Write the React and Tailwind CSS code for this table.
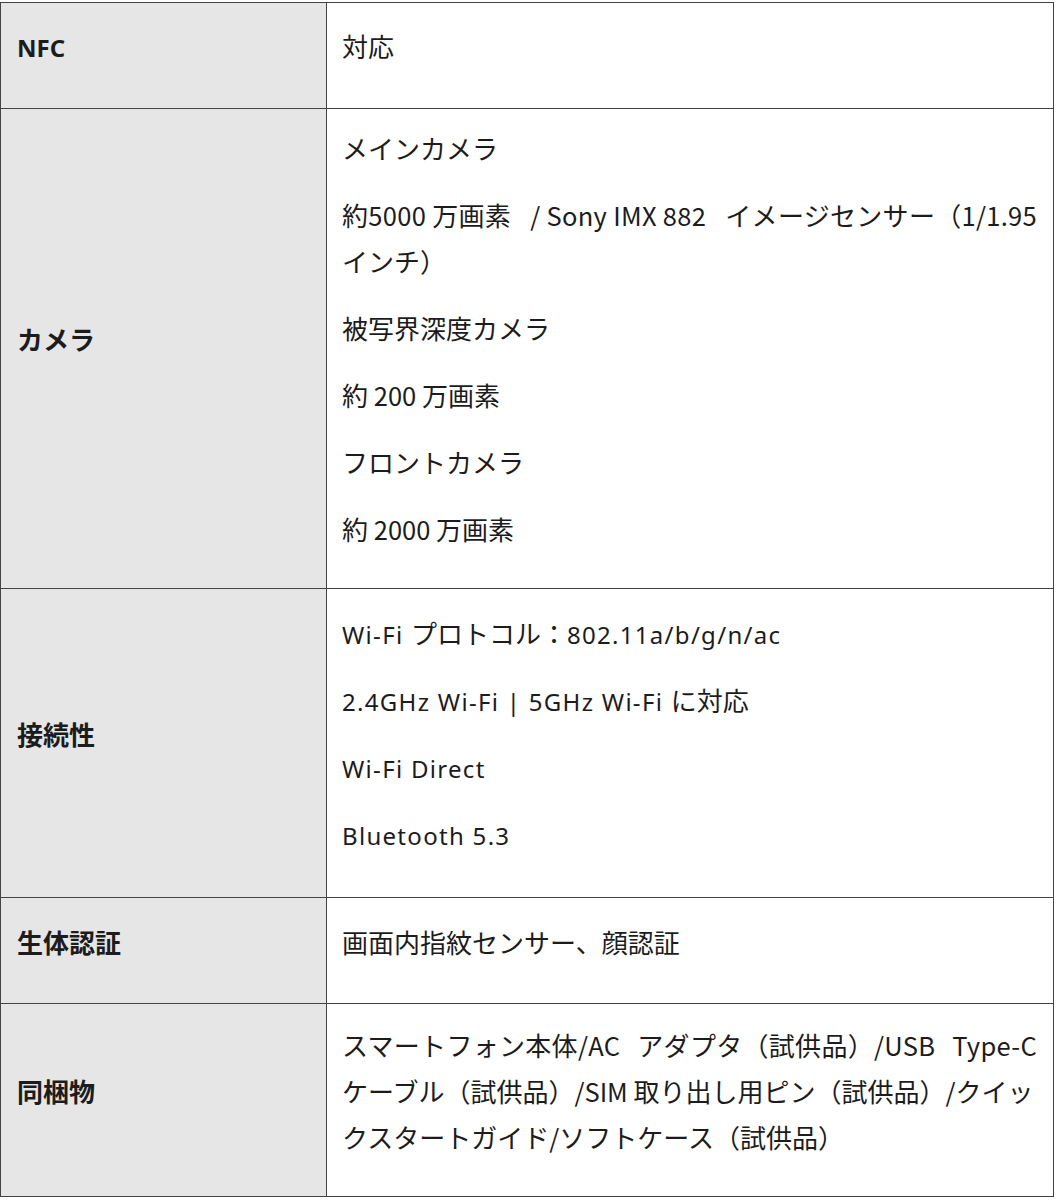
import React from 'react';

// 仕様表の行データ（配列の配列 = 両端揃えで区切る語のまとまり）
const rows = [
  { label: 'NFC', pt: 'pt-[20px]', pb: 'pb-[18px]', paras: [['対応']] },
  {
    label: 'カメラ',
    pt: 'pt-[16px]',
    pb: 'pb-[15px]',
    latin: 'cjk',
    paras: [
      ['メインカメラ'],
      [['約5000 万画素', '/ Sony IMX 882', 'イメージセンサー（1/1.95'], 'インチ）'],
      ['被写界深度カメラ'],
      ['約 200 万画素'],
      ['フロントカメラ'],
      ['約 2000 万画素'],
    ],
  },
  {
    label: '接続性',
    pt: 'pt-[21px]',
    pb: 'pb-[19px]',
    paras: [
      ['Wi-Fi プロトコル：802.11a/b/g/n/ac'],
      ['2.4GHz Wi-Fi | 5GHz Wi-Fi に対応'],
      ['Wi-Fi Direct'],
      ['Bluetooth 5.3'],
    ],
  },
  { label: '生体認証', pt: 'pt-[21px]', pb: 'pb-[17px]', paras: [['画面内指紋センサー、顔認証']] },
  {
    label: '同梱物',
    pt: 'pt-[18px]',
    pb: 'pb-[15px]',
    latin: 'cjk',
    paras: [
      [
        ['スマートフォン本体/AC', 'アダプタ（試供品）/USB', 'Type-C'],
        'ケーブル（試供品）/SIM 取り出し用ピン（試供品）/クイッ',
        'クスタートガイド/ソフトケース（試供品）',
      ],
    ],
  },
];

const CJK = /[\u3000-\u30ff\u3400-\u9fff\uff00-\uffef]/;

// 和文と欧文を分けて、欧文だけ別サイズ・字間にする
const splitRuns = (text) => {
  const runs = [];
  let cur = '';
  let curCjk = null;
  for (const ch of text) {
    const c = CJK.test(ch);
    if (curCjk === null || c === curCjk) {
      cur += ch;
    } else {
      runs.push([curCjk, cur]);
      cur = ch;
    }
    curCjk = c;
  }
  if (cur) runs.push([curCjk, cur]);
  return runs;
};

const Mixed = ({ text, latin }) =>
  splitRuns(text).map(([cjk, s], i) =>
    cjk ? (
      <span key={i}>{s}</span>
    ) : latin === 'cjk' ? (
      <span key={i} className="text-[25.5px] leading-none">{s}</span>
    ) : latin === 'label' ? (
      <span key={i} className="font-['Noto_Sans','Noto_Sans_CJK_JP',sans-serif] text-[24px] leading-none">
        {s}
      </span>
    ) : (
      <span
        key={i}
        className="font-['Noto_Sans','Noto_Sans_CJK_JP',sans-serif] text-[24px] leading-none tracking-[1.3px]"
      >
        {s}
      </span>
    )
  );

const App = () => {
  return (
    <div className="min-h-[1200px] bg-white pt-[2px] font-['Noto_Sans_CJK_JP',sans-serif] text-[26px] leading-[46px] text-[#1c1c1c]">
      <div className="w-[1054px] border border-[#444444]">
        {rows.map((row, idx) => (
          <div
            key={row.label}
            className={`grid grid-cols-[326px_1fr] ${idx > 0 ? 'border-t border-[#444444]' : ''}`}
          >
            <div className={`flex items-center border-r border-[#444444] bg-[#e6e6e6] pl-4 ${row.pt} ${row.pb}`}>
              <p className="mb-[21px] font-bold">
                <Mixed text={row.label} latin="label" />
              </p>
            </div>
            <div className={`pl-[15px] pr-4 ${row.pt} ${row.pb}`}>
              {row.paras.map((lines, i) => (
                <p key={i} className="mb-[21px]">
                  {lines.map((line, j) =>
                    Array.isArray(line) ? (
                      <span key={j} className="flex justify-between tracking-[0.3px]">
                        {line.map((w, k) => (
                          <span key={k} className="whitespace-pre">
                            <Mixed text={w} latin={row.latin} />
                          </span>
                        ))}
                      </span>
                    ) : (
                      <span key={j} className="block whitespace-nowrap">
                        <Mixed text={line} latin={row.latin} />
                      </span>
                    )
                  )}
                </p>
              ))}
            </div>
          </div>
        ))}
      </div>
    </div>
  );
};

export default App;
